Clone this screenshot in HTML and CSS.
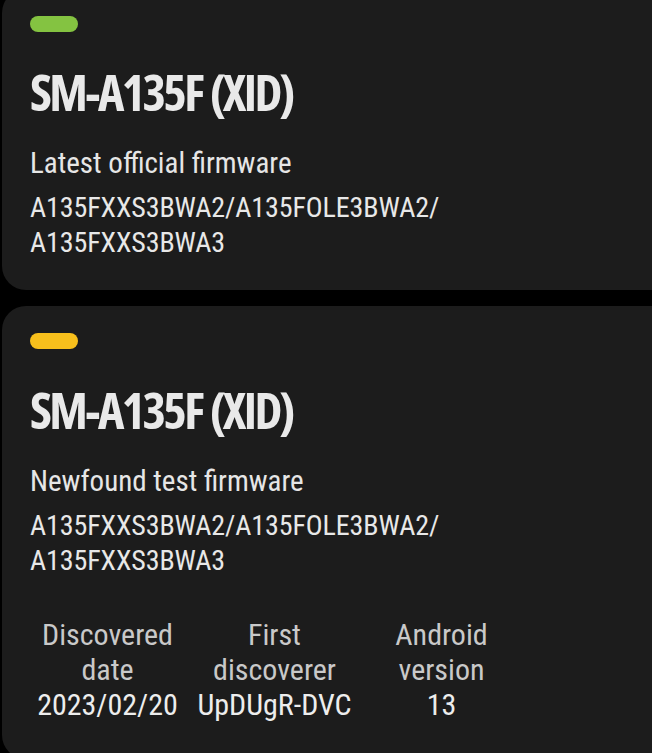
FILE: index.html
```html
<!DOCTYPE html>
<html lang="en">
<head>
<meta charset="utf-8">
<title>Firmware</title>
<link rel="stylesheet" href="styles.css">
</head>
<body>
<div class="list">
  <section class="card card-first">
    <div class="pill pill-green"></div>
    <h1 class="model">SM-A135F (XID)</h1>
    <div class="label">Latest official firmware</div>
    <div class="code">A135FXXS3BWA2/A135FOLE3BWA2/<br>A135FXXS3BWA3</div>
  </section>
  <section class="card card-second">
    <div class="pill pill-yellow"></div>
    <h1 class="model">SM-A135F (XID)</h1>
    <div class="label">Newfound test firmware</div>
    <div class="code">A135FXXS3BWA2/A135FOLE3BWA2/<br>A135FXXS3BWA3</div>
    <div class="info">
      <div class="info-col">
        <div class="info-label">Discovered<br>date</div>
        <div class="info-value">2023/02/20</div>
      </div>
      <div class="info-col">
        <div class="info-label">First<br>discoverer</div>
        <div class="info-value">UpDUgR-DVC</div>
      </div>
      <div class="info-col">
        <div class="info-label">Android<br>version</div>
        <div class="info-value">13</div>
      </div>
    </div>
  </section>
</div>
</body>
</html>
```
FILE: styles.css
```css
html, body {
  margin: 0;
  padding: 0;
  background: #000;
  overflow: hidden;
}
body {
  width: 652px;
  height: 753px;
  font-family: Roboto, "Open Sans", sans-serif;
  font-stretch: 75%;
  color: #e8e8e8;
}
.list {
  display: flex;
  flex-direction: column;
  gap: 16px;
  margin-top: -11px;
  margin-left: 2px;
  width: 700px;
}
.card {
  background: #1c1c1c;
  border-radius: 24px;
  padding: 27px 28px 30px 28px;
  display: flex;
  flex-direction: column;
  align-items: flex-start;
}
.card-second {
  padding-bottom: 37px;
}
.pill {
  width: 48px;
  height: 16px;
  border-radius: 8px;
}
.pill-green { background: #84c341; }
.pill-yellow { background: #f8c01c; }
.model {
  margin: 30px 0 0 0;
  font-family: "Open Sans", Roboto, sans-serif;
  font-size: 50px;
  line-height: 60px;
  font-weight: 700;
  font-stretch: 75%;
  letter-spacing: -2.6px;
  word-spacing: 1px;
  color: #e9e9e9;
  white-space: nowrap;
}
.card-second .model {
  margin-top: 31px;
}
.label {
  margin-top: 24px;
  font-size: 29px;
  line-height: 35px;
  color: #e6e6e6;
  white-space: nowrap;
}
.code {
  margin-top: 9px;
  font-size: 28px;
  line-height: 35px;
  letter-spacing: -0.1px;
  color: #e8e8e8;
  white-space: nowrap;
}
.info {
  margin-top: 39px;
  margin-left: -6px;
  display: grid;
  grid-template-columns: repeat(3, 167px);
  text-align: center;
  font-size: 30px;
  line-height: 35px;
}
.info-label {
  color: #c9c9c9;
}
.info-value {
  color: #ededed;
  white-space: nowrap;
}
```
